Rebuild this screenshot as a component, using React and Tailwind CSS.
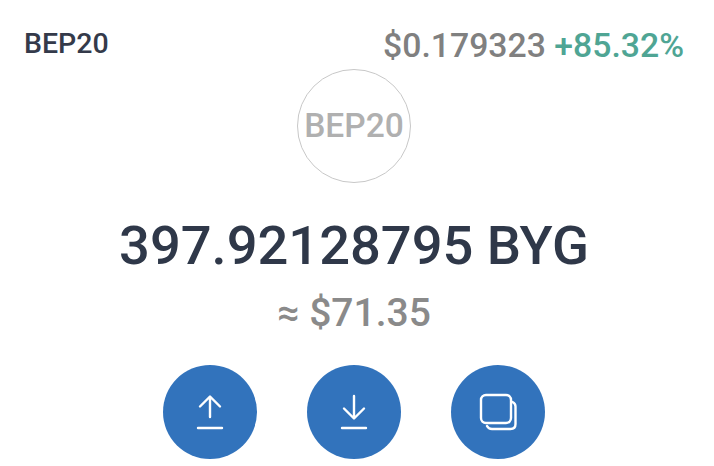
import React from 'react';

function ActionButton({ children }) {
    return (
        <div className="w-[94px] h-[94px] rounded-full bg-[#3273bc] flex items-center justify-center">
            {children}
        </div>
    );
}

export default function App() {
    return (
        <div className="w-[714px] h-[466px] overflow-hidden bg-white flex flex-col font-['Roboto',sans-serif]">
            {/* Header */}
            <div className="flex items-start justify-between pl-6 pr-[30px] pt-[27px] h-[69px]">
                <span className="text-[28.5px] leading-[34px] font-medium text-[#343a4a]">BEP20</span>
                <div className="text-[33.75px] leading-[38px] font-medium">
                    <span className="text-[#808080]">$0.179323</span>
                    <span className="text-[#4fa594]"> +85.32%</span>
                </div>
            </div>

            {/* Token logo */}
            <div className="flex justify-center pr-[6px]">
                <div className="w-[114px] h-[114px] rounded-full border border-[#c8c8c8] flex items-center justify-center">
                    <span className="text-[33.5px] font-medium text-[#b0b0b0]">BEP20</span>
                </div>
            </div>

            {/* Balance */}
            <div className="mt-[31px] pr-[6px] text-center text-[54.25px] leading-[64px] font-medium text-[#2f3849]">397.92128795 BYG</div>
            <div className="mt-[13px] pr-[6px] text-center text-[39px] leading-[44px] font-medium text-[#8a8a8a]">≈ $71.35</div>

            {/* Actions */}
            <div className="mt-[30px] pr-[6px] flex justify-center gap-[50px]">
                <ActionButton>
                    <svg width="28" height="36" viewBox="0 0 28 36" fill="none" stroke="white" strokeWidth="2.4" strokeLinecap="round" strokeLinejoin="round">
                        <path d="M14 23V3M4 12.5L14 2.5L24 12.5M2 34H26" />
                    </svg>
                </ActionButton>
                <ActionButton>
                    <svg width="28" height="36" viewBox="0 0 28 36" fill="none" stroke="white" strokeWidth="2.4" strokeLinecap="round" strokeLinejoin="round">
                        <path d="M14 2V24M4 14.5L14 24.5L24 14.5M2 34H26" />
                    </svg>
                </ActionButton>
                <ActionButton>
                    <svg width="38" height="38" viewBox="0 0 38 38" fill="none" stroke="white" strokeWidth="2.4" strokeLinecap="round" strokeLinejoin="round">
                        <rect x="2" y="2" width="30" height="28" rx="5" />
                        <path d="M33.5 9C35.5 10 36.5 11.5 36.5 13.5V31C36.5 34 34.5 36 31.5 36H13C10.5 36 9 35 8 33" />
                    </svg>
                </ActionButton>
            </div>
        </div>
    );
}
